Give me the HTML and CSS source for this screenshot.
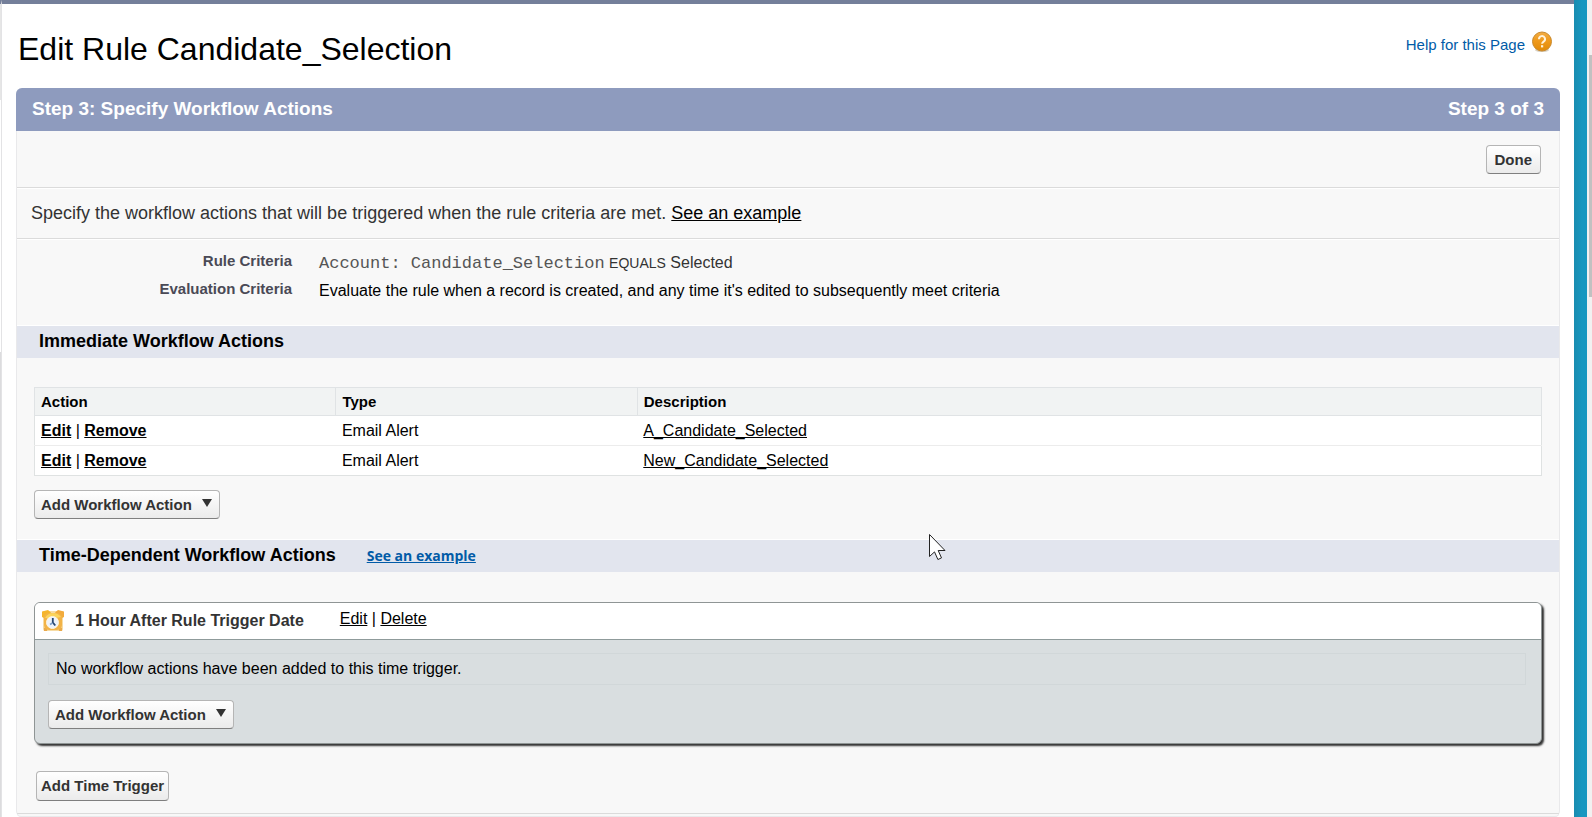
FILE: index.html
```html
<!DOCTYPE html>
<html lang="en">
<head>
<meta charset="utf-8">
<title>Edit Rule Candidate_Selection</title>
<link rel="stylesheet" href="styles.css">
</head>
<body>
<div class="frame">
  <div class="rail"><span class="rail-top"></span><span class="rail-mid"></span><span class="rail-low"></span></div>
  <main class="page">
    <header class="page-head">
      <h1 class="title">Edit Rule Candidate_Selection</h1>
      <a class="help" href="#help">Help for this Page
        <svg class="help-icon" width="22" height="22" viewBox="0 0 22 22" aria-hidden="true">
          <defs><linearGradient id="orb" x1="0" y1="0" x2="0" y2="1"><stop offset="0" stop-color="#f3ad45"/><stop offset=".45" stop-color="#ef9a1c"/><stop offset="1" stop-color="#e08a08"/></linearGradient></defs>
          <ellipse cx="11" cy="19" rx="7" ry="2" fill="#d8d2c6"/>
          <circle cx="11" cy="10.5" r="9.5" fill="url(#orb)" stroke="#c98a2e"/>
          <path d="M8 8.2a3 3 0 1 1 4.6 2.4c-1 .7-1.5 1.1-1.5 2.2" fill="none" stroke="#fff3dc" stroke-width="2"/>
          <rect x="10" y="14.2" width="2.2" height="2.2" fill="#fff3dc"/>
        </svg>
      </a>
    </header>
    <section class="panel">
      <div class="panel-head"><h2>Step 3: Specify Workflow Actions</h2><span>Step 3 of 3</span></div>
      <div class="toolbar"><button class="btn" type="button">Done</button></div>
      <p class="intro">Specify the workflow actions that will be triggered when the rule criteria are met. <a href="#example">See an example</a></p>
      <dl class="criteria">
        <dt>Rule Criteria</dt>
        <dd class="rule"><code>Account: Candidate_Selection</code> <small>EQUALS</small> Selected</dd>
        <dt>Evaluation Criteria</dt>
        <dd>Evaluate the rule when a record is created, and any time it's edited to subsequently meet criteria</dd>
      </dl>
      <div class="band"><h3>Immediate Workflow Actions</h3></div>
      <div class="immediate">
        <table class="actions">
          <thead><tr><th class="col-action">Action</th><th class="col-type">Type</th><th>Description</th></tr></thead>
          <tbody>
            <tr><td><a class="strong" href="#edit1">Edit</a> | <a class="strong" href="#remove1">Remove</a></td><td>Email Alert</td><td><a href="#alert1">A_Candidate_Selected</a></td></tr>
            <tr><td><a class="strong" href="#edit2">Edit</a> | <a class="strong" href="#remove2">Remove</a></td><td>Email Alert</td><td><a href="#alert2">New_Candidate_Selected</a></td></tr>
          </tbody>
        </table>
        <button class="btn menu" type="button">Add Workflow Action<svg class="caret" width="10" height="8" viewBox="0 0 10 8" aria-hidden="true"><path d="M0 0h10L5 8z" fill="#333"/></svg></button>
      </div>
      <div class="band"><h3>Time-Dependent Workflow Actions</h3><a class="band-link" href="#time-example">See an example</a></div>
      <div class="timed">
        <section class="trigger">
          <div class="trigger-head">
            <svg width="22" height="22" viewBox="0 0 22 22" aria-hidden="true">
              <rect x="1" y="1" width="20" height="20" rx="2" fill="#f7dca4"/>
              <path d="M0 1.5 6 0 9 2.500 2 8 0 7z" fill="#f5b52c"/>
              <path d="M22 1.5 16 0 13 2.500 20 8 22 7z" fill="#f2ab3c"/>
              <path d="M2 18 6 16 5 21H2zM20 18 16 16 17 21h3z" fill="#e9a94c"/>
              <rect x="2" y="3" width="18" height="17" rx="5" fill="#f2b347"/>
              <path d="M3 8Q6 3 11 3T19 7L14 8z" fill="#fbd45c"/>
              <circle cx="10.5" cy="12.5" r="6" fill="#eef3fa" stroke="#fff6df"/>
              <path d="M10.8 8v4.5l2.500 3" fill="none" stroke="#27466f" stroke-width="1.8"/>
              <path d="M10.5 13 8 14.500" stroke="#7a9cc8" stroke-width="1.5"/>
            </svg>
            <h4>1 Hour After Rule Trigger Date</h4>
            <span class="trigger-links"><a href="#edit-trigger">Edit</a> | <a href="#delete-trigger">Delete</a></span>
          </div>
          <div class="trigger-body">
            <p class="empty">No workflow actions have been added to this time trigger.</p>
            <button class="btn menu" type="button">Add Workflow Action<svg class="caret" width="10" height="8" viewBox="0 0 10 8" aria-hidden="true"><path d="M0 0h10L5 8z" fill="#333"/></svg></button>
          </div>
        </section>
        <button class="btn add-trigger" type="button">Add Time Trigger</button>
      </div>
      <div class="panel-foot"></div>
    </section>
  </main>
  <div class="edge"></div>
  <div class="scroll"><span class="thumb"></span></div>
</div>
<svg class="cursor" width="20" height="28" viewBox="0 0 20 28" aria-hidden="true"><path d="M1.500 1.500v22l5-4.600 3.400 7.600 3.600-1.600-3.300-7.400h6.800z" fill="#fff" stroke="#222" stroke-width="1"/></svg>
</body>
</html>
```
FILE: styles.css
```css
* { box-sizing: border-box; }
body {
  margin: 0;
  background: #fff;
  color: #000;
  font: 16px/20px "Liberation Sans", Arial, sans-serif;
  overflow: hidden;
}
h1, h2, h3, h4, p, dl, dd { margin: 0; }
a { color: inherit; }
.frame { display: flex; min-height: 100vh; }
.rail { width: 2px; display: flex; flex-direction: column; border-top: 4px solid #747f9a; border-right: 1px solid #e3e3e5; }
.rail-top { height: 96px; background: #e6e6e6; }
.rail-mid { height: 252px; background: #fff; }
.rail-low { flex: 1; background: #dcdcde; }
.page { flex: 1; border-top: 4px solid #747f9a; padding: 0 14px; }
.page-head { display: flex; justify-content: space-between; align-items: flex-start; height: 84px; padding: 27px 7px 0 2px; }
.title { font-size: 32px; line-height: 36px; font-weight: 400; }
.help { display: flex; align-items: center; gap: 6px; color: #015ba7; font-size: 15px; text-decoration: none; }
.help-icon { margin-bottom: 6px; }
.panel { background: #f8f8f8; border: solid #e9e9eb; border-width: 0 1px; border-radius: 6px; }
.panel-head {
  display: flex; justify-content: space-between; align-items: center;
  height: 43px; margin: 0 -1px; padding: 0 16px 2px;
  background: #8e9bbe; color: #fff; border-radius: 6px 6px 0 0;
  font-size: 19px; font-weight: 700;
}
.panel-head h2 { font-size: 19px; }
.toolbar { display: flex; justify-content: flex-end; padding: 14px 18px 13px; border-bottom: 1px solid #dbdbdb; }
.btn {
  height: 29px; padding: 0 8px;
  border: 1px solid #b5b5b5; border-bottom-color: #7f7f7f; border-radius: 4px;
  background: linear-gradient(#fff, #ebebeb); color: #333;
  font: bold 15px/20px "Liberation Sans", Arial, sans-serif;
}
.menu { display: flex; align-items: center; gap: 10px; padding: 0 7px 0 6px; }
.caret { margin-bottom: 3px; }
.intro { padding: 14px 14px 15px; border-top: 1px solid #fff; border-bottom: 1px solid #dbdbdb; color: #333; font-size: 18px; }
.intro a { color: #000; }
.criteria {
  display: grid; grid-template-columns: 275px 1fr; column-gap: 27px; row-gap: 7px;
  padding: 11px 0 24px; border-top: 1px solid #fff;
}
.criteria dt { color: #4a4a56; font-size: 15px; font-weight: 700; text-align: right; }
.criteria dd { padding-top: 2px; }
.criteria .rule { color: #333; margin-bottom: -2px; }
.criteria code { color: #555; font: 17px/20px "Liberation Mono", "Courier New", monospace; }
.criteria small { font-size: 14px; }
.band { display: flex; align-items: center; height: 33px; padding: 0 22px 3px; border-top: 1px solid #fff; background: #e2e5ee; }
.band h3 { font-size: 18px; }
.band-link { margin: 2px 0 0 31px; color: #015ba7; font: bold 14px/20px "Open Sans", sans-serif; }
.immediate { padding: 29px 17px 20px; }
.actions { width: 100%; margin-bottom: 14px; table-layout: fixed; border: 1px solid #dfe2e2; border-collapse: collapse; background: #fff; }
.actions th { height: 28px; padding: 0 6px; border: 1px solid #e0e3e5; background: #f1f3f3; font-size: 15px; text-align: left; }
.actions td { height: 30px; padding: 0 6px; border-top: 1px solid #ececec; }
.col-action, .col-type { width: 20%; }
.strong { font-weight: 700; }
.timed { padding: 30px 17px 12px; }
.trigger { border: 1px solid #8f9595; border-radius: 6px; background: #d9dee0; box-shadow: 2px 2px 2px #333; overflow: hidden; }
.trigger-head { display: flex; align-items: center; height: 37px; padding: 0 7px; border-bottom: 1px solid #8f9b9b; background: #fff; }
.trigger-head h4 { margin-left: 11px; color: #333; font-size: 16px; }
.trigger-links { margin: 0 0 4px 36px; }
.trigger-body { padding: 13px 15px 14px 13px; }
.empty { margin-bottom: 15px; padding: 5px 7px; border: 1px solid #d1d7d9; }
.add-trigger { margin: 27px 0 0 2px; height: 30px; padding: 0 4px; }
.panel-foot { height: 4px; border-top: 1px solid #dbdbdb; border-bottom: 1px solid #e9e9eb; border-radius: 0 0 6px 6px; }
.edge { width: 13px; background: linear-gradient(90deg, #198cb0, #1797c0 8px); }
.scroll { width: 5px; padding: 55px 0 0 2px; background: #f1f1f1; }
.thumb { display: block; height: 242px; background: #c1c1c1; }
.cursor { position: absolute; left: 928px; top: 533px; }
```
